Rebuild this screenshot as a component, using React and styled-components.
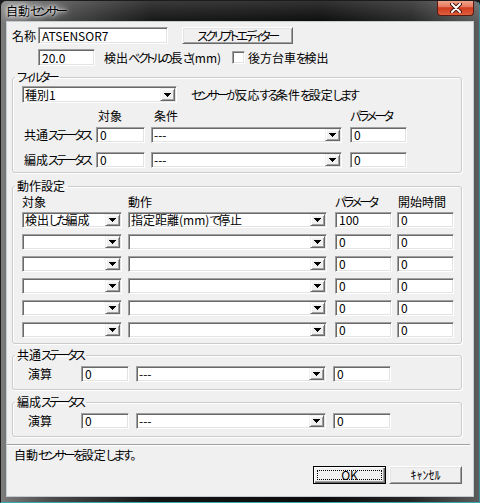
import React from 'react';
import styled, { createGlobalStyle, css } from 'styled-components';

const GlobalStyle = createGlobalStyle`
  html, body {
    margin: 0;
    padding: 0;
    background: #1a1a1a;
  }
  body {
    font-family: "Noto Sans CJK JP", "Noto Sans", sans-serif;
    font-size: 12px;
    font-feature-settings: "palt" 1;
    color: #000;
  }
`;

// MS UI Gothic sets kana much narrower than kanji; tighten kana runs only
const Kana = styled.span`
  letter-spacing: -2.5px;
`;

const KANA = /([\u3040-\u30ff]+)/;
const jp = (s) =>
  s.split(KANA).map((part, i) => (KANA.test(part) ? <Kana key={i}>{part}</Kana> : part));

// classic 3D sunken edge used by edits, combos and the checkbox
const sunken = css`
  box-sizing: border-box;
  background: #fff;
  border: 1px solid;
  border-color: #a0a0a0 #fff #fff #a0a0a0;
  box-shadow: inset 1px 1px 0 #696969, inset -1px -1px 0 #e3e3e3;
`;

const Window = styled.div`
  width: 480px;
  height: 503px;
  box-sizing: border-box;
  display: flex;
  flex-direction: column;
  border: 1px solid #1c1c1c;
  border-right-color: #3a8e9a;
  border-bottom-color: #3fa6b4;
  border-radius: 6px 6px 0 0;
  overflow: hidden;
  background:
    linear-gradient(to bottom, rgba(255, 255, 255, 0.16), rgba(255, 255, 255, 0) 22px),
    linear-gradient(to right, #7c7c7c 0, #4c4c4c 50px, #151515 150px, #0b0b0b 320px, #262626 410px, #5e5e5e 480px);
`;

const TitleBar = styled.div`
  height: 21px;
  flex: none;
  display: flex;
  align-items: flex-start;
  justify-content: space-between;
`;

const Title = styled.span`
  margin: 3px 0 0 5px;
  font-size: 12px;
  line-height: 14px;
  color: #000;
  text-shadow: 0 0 3px #fff, 0 0 6px #fff, 0 0 9px #fff;
`;

const CloseButton = styled.div`
  width: 37px;
  height: 16px;
  margin: -1px 5px 0 0;
  box-sizing: border-box;
  border: 1px solid #5a1a10;
  border-top: none;
  border-radius: 0 0 4px 4px;
  background: linear-gradient(to bottom, #f2ac94 0%, #e6785e 45%, #cf3a1e 52%, #e0603c 100%);
  display: flex;
  align-items: center;
  justify-content: center;
`;

const Client = styled.div`
  flex: 1;
  margin: 0 6px 6px 6px;
  padding-left: 5px;
  background: #f0f0f0;
  display: flex;
  flex-direction: column;
  box-shadow: 0 0 0 1px #c4ccd0;
`;

const Row = styled.div`
  display: flex;
  align-items: center;
  margin-top: ${(p) => p.$mt || 0}px;
`;

const Label = styled.span`
  flex: none;
  width: ${(p) => (p.$w ? `${p.$w}px` : 'auto')};
  margin-left: ${(p) => p.$ml || 0}px;
  padding-left: ${(p) => p.$pl || 0}px;
  box-sizing: border-box;
  font-size: 12px;
  line-height: 14px;
  white-space: nowrap;
`;

const TextBox = styled.div`
  ${sunken};
  flex: none;
  width: ${(p) => p.$w}px;
  height: ${(p) => p.$h || 16}px;
  margin-left: ${(p) => p.$ml || 0}px;
  padding-left: 3px;
  display: flex;
  align-items: center;
  font-size: 12px;
  line-height: 14px;
  white-space: nowrap;
`;

const ComboBox = styled.div`
  ${sunken};
  flex: none;
  width: ${(p) => p.$w}px;
  height: ${(p) => p.$h || 16}px;
  padding: 1px;
  display: flex;
  align-items: stretch;
`;

const ComboText = styled.span`
  flex: 1;
  padding-left: 1px;
  display: flex;
  align-items: center;
  font-size: 12px;
  line-height: 14px;
  white-space: nowrap;
`;

const DropButton = styled.span`
  flex: none;
  width: 15px;
  box-sizing: border-box;
  background: #f0f0f0;
  border: 1px solid;
  border-color: #f0f0f0 #696969 #696969 #f0f0f0;
  box-shadow: inset 1px 1px 0 #fff, inset -1px -1px 0 #a0a0a0;
  display: flex;
  align-items: center;
  justify-content: center;
`;

const CheckBox = styled.span`
  ${sunken};
  flex: none;
  width: 13px;
  height: 13px;
`;

const PushButton = styled.button`
  flex: none;
  width: ${(p) => p.$w}px;
  height: ${(p) => p.$h}px;
  margin: 0 0 0 ${(p) => p.$ml || 0}px;
  padding: 0;
  box-sizing: border-box;
  font-family: "Noto Sans CJK JP", "Noto Sans", sans-serif;
  font-feature-settings: "palt" 1;
  font-size: 12px;
  line-height: 14px;
  color: #000;
  background: #f0f0f0;
  border: 1px solid;
  border-color: ${(p) => (p.$default ? '#000' : '#fff #696969 #696969 #fff')};
  box-shadow: ${(p) =>
    p.$default
      ? 'inset 1px 1px 0 #fff, inset -1px -1px 0 #696969, inset -2px -2px 0 #a0a0a0'
      : 'inset 1px 1px 0 #e3e3e3, inset -1px -1px 0 #a0a0a0'};
  outline: ${(p) => (p.$default ? '1px dotted #000' : 'none')};
  outline-offset: -5px;
`;

const Group = styled.fieldset`
  width: 450px;
  box-sizing: border-box;
  min-width: 0;
  margin: ${(p) => p.$mt}px 0 0 0;
  padding: 0;
  border: 1px solid #cbcbcb;
  border-radius: 3px;
  box-shadow: inset 1px 1px 0 #fff, 1px 1px 0 #fff;
`;

const Legend = styled.legend`
  margin-left: 2px;
  padding: 0 3px 0 2px;
  font-size: 12px;
  line-height: 14px;
`;

const GroupBody = styled.div`
  padding: ${(p) => p.$pt}px 0 ${(p) => p.$pb}px 9px;
`;

const Grid = styled.div`
  display: grid;
  grid-template-columns: ${(p) => p.$cols};
  row-gap: ${(p) => p.$gap || 0}px;
  align-items: center;
  margin-top: ${(p) => p.$mt || 0}px;
`;

const Head = styled.span`
  padding-left: ${(p) => p.$pl || 0}px;
  font-size: 12px;
  line-height: 14px;
  white-space: nowrap;
`;

const Separator = styled.div`
  margin: 7px 3px 0 -5px;
  height: 1px;
  background: #a0a0a0;
  border-bottom: 1px solid #fff;
`;

const StatusText = styled.div`
  margin-top: 2px;
  padding-left: 2px;
  font-size: 12px;
  line-height: 14px;
`;

const ButtonRow = styled.div`
  display: flex;
  justify-content: flex-end;
  gap: 3px;
  margin-top: 4px;
  padding-right: 11px;
`;

const Arrow = () => (
  <svg width="7" height="4" viewBox="0 0 7 4" shapeRendering="crispEdges">
    <polygon points="0,0 7,0 3.5,4" fill="#000" />
  </svg>
);

const Combo = ({ w, h = 16, text = '' }) => (
  <ComboBox $w={w} $h={h}>
    <ComboText>{jp(text)}</ComboText>
    <DropButton>
      <Arrow />
    </DropButton>
  </ComboBox>
);

const actionRows = [
  { target: '検出した編成', action: '指定距離(mm)で停止', param: '100', start: '0' },
  { target: '', action: '', param: '0', start: '0' },
  { target: '', action: '', param: '0', start: '0' },
  { target: '', action: '', param: '0', start: '0' },
  { target: '', action: '', param: '0', start: '0' },
  { target: '', action: '', param: '0', start: '0' },
];

const filterCols = '74px 55px 199px 57px';
const actionCols = '106px 207px 62px 57px';
const calcCols = '59px 55px 197px 58px';

const StatusGroup = ({ title, mt }) => (
  <Group $mt={mt}>
    <Legend>{jp(title)}</Legend>
    <GroupBody $pt={4} $pb={7}>
      <Grid $cols={calcCols}>
        <Label $pl={6}>演算</Label>
        <TextBox $w={48}>0</TextBox>
        <Combo w={190} text="---" />
        <TextBox $w={58}>0</TextBox>
      </Grid>
    </GroupBody>
  </Group>
);

export default function App() {
  return (
    <>
      <GlobalStyle />
      <Window>
        <TitleBar>
          <Title>{jp('自動センサー')}</Title>
          <CloseButton>
            <svg width="12" height="10" viewBox="0 0 12 10">
              <path d="M2 1 L10 9 M10 1 L2 9" stroke="#4a1208" strokeWidth="4" strokeLinecap="round" />
              <path d="M2 1 L10 9 M10 1 L2 9" stroke="#fff" strokeWidth="2" strokeLinecap="round" />
            </svg>
          </CloseButton>
        </TitleBar>

        <Client>
          <Row $mt={5}>
            <Label $w={26}>名称</Label>
            <TextBox $w={130} $h={17}>ATSENSOR7</TextBox>
            <PushButton $w={111} $h={17} $ml={14}>{jp('スクリプトエディター')}</PushButton>
          </Row>
          <Row $mt={5}>
            <TextBox $w={57} $h={17} $ml={26}>20.0</TextBox>
            <Label $ml={9} $w={128}>{jp('検出ベクトルの長さ(mm)')}</Label>
            <CheckBox />
            <Label $ml={3}>{jp('後方台車を検出')}</Label>
          </Row>

          <Group $mt={4}>
            <Legend>{jp('フィルター')}</Legend>
            <GroupBody $pt={2} $pb={4}>
              <Row>
                <Combo w={155} h={17} text="種別1" />
                <Label $ml={14}>{jp('センサーが反応する条件を設定します')}</Label>
              </Row>
              <Grid $cols={filterCols} $mt={6}>
                <span />
                <Head $pl={2}>対象</Head>
                <Head $pl={3}>条件</Head>
                <Head>{jp('パラメータ')}</Head>
              </Grid>
              <Grid $cols={filterCols} $mt={4} $gap={9}>
                <Label $pl={2}>{jp('共通ステータス')}</Label>
                <TextBox $w={49}>0</TextBox>
                <Combo w={191} text="---" />
                <TextBox $w={57}>0</TextBox>
                <Label $pl={2}>{jp('編成ステータス')}</Label>
                <TextBox $w={49}>0</TextBox>
                <Combo w={191} text="---" />
                <TextBox $w={57}>0</TextBox>
              </Grid>
            </GroupBody>
          </Group>

          <Group $mt={6}>
            <Legend>動作設定</Legend>
            <GroupBody $pt={2} $pb={5}>
              <Grid $cols={actionCols}>
                <Head>対象</Head>
                <Head>動作</Head>
                <Head>{jp('パラメータ')}</Head>
                <Head $pl={1}>開始時間</Head>
              </Grid>
              <Grid $cols={actionCols} $mt={3} $gap={6}>
                {actionRows.map((r, i) => (
                  <React.Fragment key={i}>
                    <Combo w={100} text={r.target} />
                    <Combo w={199} text={r.action} />
                    <TextBox $w={57}>{r.param}</TextBox>
                    <TextBox $w={57}>{r.start}</TextBox>
                  </React.Fragment>
                ))}
              </Grid>
            </GroupBody>
          </Group>

          <StatusGroup title="共通ステータス" mt={4} />
          <StatusGroup title="編成ステータス" mt={5} />

          <Separator />
          <StatusText>{jp('自動センサーを設定します。')}</StatusText>
          <ButtonRow>
            <PushButton $w={73} $h={18} $default>OK</PushButton>
            <PushButton $w={73} $h={18}>ｷｬﾝｾﾙ</PushButton>
          </ButtonRow>
        </Client>
      </Window>
    </>
  );
}
